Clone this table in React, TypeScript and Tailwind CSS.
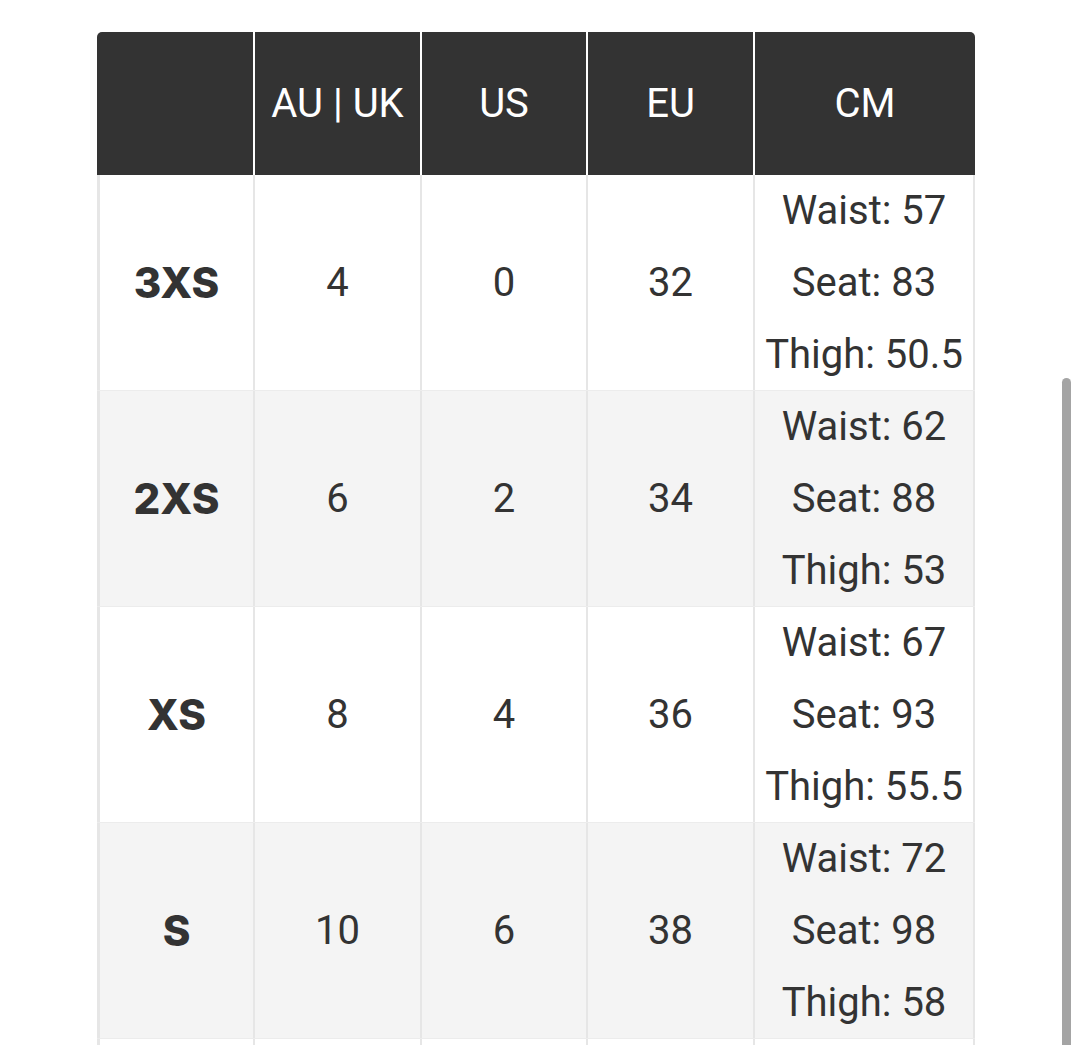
const HEAD = ["", "AU | UK", "US", "EU", "CM"];

const ROWS = [
  { size: "3XS", au: "4", us: "0", eu: "32", cm: ["Waist: 57", "Seat: 83", "Thigh: 50.5"] },
  { size: "2XS", au: "6", us: "2", eu: "34", cm: ["Waist: 62", "Seat: 88", "Thigh: 53"] },
  { size: "XS", au: "8", us: "4", eu: "36", cm: ["Waist: 67", "Seat: 93", "Thigh: 55.5"] },
  { size: "S", au: "10", us: "6", eu: "38", cm: ["Waist: 72", "Seat: 98", "Thigh: 58"] },
];

const WIDTHS = ["w-[156px]", "w-[167px]", "w-[166px]", "w-[167px]", "w-[222px]"];

export default function App() {
  return (
    <div className="relative h-[1045px] overflow-hidden bg-white font-['Roboto',sans-serif] text-[#333]">
      <div className="pt-[32px] pl-[97px]">
        <div className="w-[878px]">
          {/* Header */}
          <div className="flex h-[143px] rounded-t-[5px] overflow-hidden bg-[#333]">
            {HEAD.map((h, i) => (
              <div
                key={i}
                className={`${WIDTHS[i]} flex items-center justify-center text-[40px] text-white ${
                  i > 0 ? "border-l-2 border-white" : ""
                }`}
              >
                {h}
              </div>
            ))}
          </div>

          {/* Body */}
          {ROWS.map((r, ri) => (
            <div
              key={r.size}
              className={`flex h-[216px] border-b border-[#ececec] ${ri % 2 === 1 ? "bg-[#f4f4f4]" : "bg-white"}`}
            >
              <div className={`${WIDTHS[0]} flex items-center justify-center border-l-[3px] border-[#e6e6e6] font-['Inter',sans-serif] text-[42px] font-extrabold text-[#333]`}>
                {r.size}
              </div>
              <div className={`${WIDTHS[1]} flex items-center justify-center border-l-2 border-[#e6e6e6] text-[40px]`}>
                {r.au}
              </div>
              <div className={`${WIDTHS[2]} flex items-center justify-center border-l-2 border-[#e6e6e6] text-[40px]`}>
                {r.us}
              </div>
              <div className={`${WIDTHS[3]} flex items-center justify-center border-l-2 border-[#e6e6e6] text-[40px]`}>
                {r.eu}
              </div>
              <div className={`${WIDTHS[4]} flex flex-col items-center justify-center border-x-2 border-[#e6e6e6] text-[40px] leading-[72px]`}>
                {r.cm.map((l) => (
                  <span key={l} className="whitespace-nowrap">{l}</span>
                ))}
              </div>
            </div>
          ))}

          {/* start of next row, cut by the viewport */}
          <div className="flex h-[20px] bg-white">
            {WIDTHS.map((w, i) => (
              <div
                key={i}
                className={`${w} ${i === 0 ? "border-l-[3px]" : "border-l-2"} ${i === 4 ? "border-r-2" : ""} border-[#e6e6e6]`}
              />
            ))}
          </div>
        </div>
      </div>

      {/* scroll indicator */}
      <div className="absolute left-[1062px] top-[378px] h-[700px] w-[9px] rounded-full bg-[#a4a4a4]" />
    </div>
  );
}
